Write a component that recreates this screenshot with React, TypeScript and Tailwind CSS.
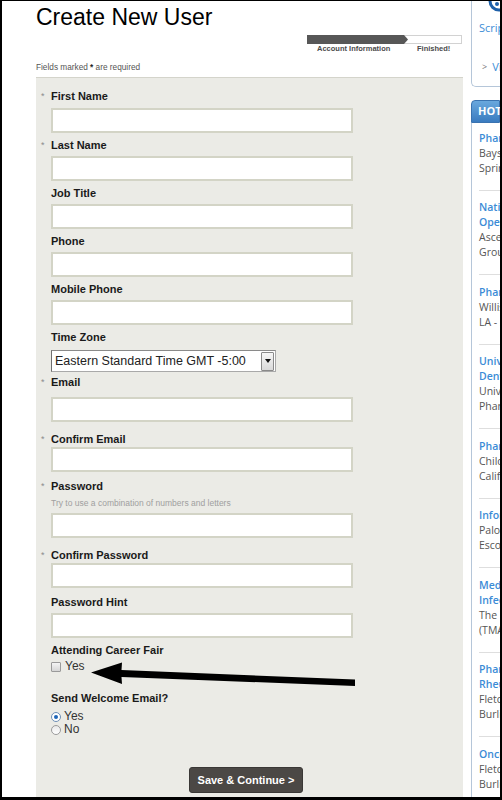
import React from "react";

type Field = {
  label: string;
  required?: boolean;
  labelTop: string;
  inputTop: string;
  hint?: string;
};

const fields: Field[] = [
  { label: "First Name", required: true, labelTop: "mt-[11px]", inputTop: "mt-[5px]" },
  { label: "Last Name", required: true, labelTop: "mt-[5px]", inputTop: "mt-[4px]" },
  { label: "Job Title", labelTop: "mt-[5px]", inputTop: "mt-[4px]" },
  { label: "Phone", labelTop: "mt-[5px]", inputTop: "mt-[4px]" },
  { label: "Mobile Phone", labelTop: "mt-[5px]", inputTop: "mt-[4px]" },
];

const fields2: Field[] = [
  { label: "Email", required: true, labelTop: "mt-[3px]", inputTop: "mt-[8px]" },
  { label: "Confirm Email", required: true, labelTop: "mt-[10px]", inputTop: "mt-[1px]" },
  {
    label: "Password",
    required: true,
    labelTop: "mt-[7px]",
    inputTop: "mt-[4px]",
    hint: "Try to use a combination of numbers and letters",
  },
  { label: "Confirm Password", required: true, labelTop: "mt-[10px]", inputTop: "mt-[1px]" },
  { label: "Password Hint", labelTop: "mt-[7px]", inputTop: "mt-[4px]" },
];

const jobs: { links: string[]; lines: string[] }[] = [
  { links: ["Pharmacist"], lines: ["Baystate Health", "Springfield, MA"] },
  { links: ["National Manager,", "Operations"], lines: ["Ascend Pharmacy", "Group Inc."] },
  { links: ["Pharmacist"], lines: ["Willis-Knighton", "LA - Shreveport"] },
  { links: ["University of", "Denver Pharmacist"], lines: ["University of Denver", "Pharmacy Services"] },
  { links: ["Pharmacist"], lines: ["Children's Hospital", "California"] },
  { links: ["Informatics"], lines: ["Palomar Health", "Escondido, CA"] },
  { links: ["Medical Science Liaison,", "Infectious Disease"], lines: ["The Medicines Company", "(TMAC)"] },
  { links: ["Pharmacist,", "Rheumatology"], lines: ["Fletcher Allen", "Burlington, VT"] },
  { links: ["Oncology Pharmacist"], lines: ["Fletcher Allen", "Burlington, VT"] },
];

const Label = ({ text, required, className }: { text: string; required?: boolean; className: string }) => (
  <div className={`flex h-[14px] items-center ${className}`}>
    <span className="w-[15px] pl-[5px] text-[9px] leading-none text-[#8c8c8c]">{required ? "*" : ""}</span>
    <span className="text-[11px] font-bold leading-[14px] text-[#1a1a1a]">{text}</span>
  </div>
);

const TextInput = ({ className }: { className: string }) => (
  <div className={`ml-[15px] h-[25px] w-[302px] border-2 border-[#d3d4c6] bg-white ${className}`} />
);

const FieldBlock = ({ field }: { field: Field }) => (
  <>
    <Label text={field.label} required={field.required} className={field.labelTop} />
    {field.hint && (
      <div className="mt-[4px] ml-[15px] h-[12px] text-[8.5px] leading-[12px] text-[#a0a0a0]">{field.hint}</div>
    )}
    <TextInput className={field.inputTop} />
  </>
);

const ProgressBar = () => (
  <div className="mt-[4px] mr-[1px] w-[155px] self-end">
    <svg width="155" height="9" viewBox="0 0 155 9">
      <rect x="96" y="0.5" width="58.5" height="8" fill="#fff" stroke="#d2d2d2" />
      <polygon points="0,0 97,0 101,4.5 97,9 0,9" fill="#575757" />
    </svg>
    <div className="flex h-[10px] items-center text-[7.5px] font-bold leading-[10px] text-[#4a4a4a]">
      <span className="w-[110px] pl-[10px]">Account Information</span>
      <span>Finished!</span>
    </div>
  </div>
);

const Sidebar = () => (
  <div className="ml-[8px] flex flex-1 flex-col overflow-hidden whitespace-nowrap font-['Open_Sans',sans-serif]">
    <div className="relative h-[86px] shrink-0 rounded-bl-[5px] border-b border-l border-[#b5c6d9]">
      <svg className="absolute top-[-8px] left-[16px]" width="24" height="22" viewBox="0 0 24 22">
        <circle cx="11" cy="8" r="9" fill="none" stroke="#1d5fa8" strokeWidth="3" />
        <circle cx="9" cy="11" r="2" fill="#1d5fa8" />
      </svg>
      <div className="mt-[19px] pl-[7px] text-[11px] leading-[16px] text-[#3c8dd6]">Scripts</div>
      <div className="mt-[23px] flex items-center pl-[10px] text-[11px] leading-[16px]">
        <span className="text-[9px] text-[#777]">&gt;</span>
        <span className="ml-[5px] text-[#3c8dd6]">View all</span>
      </div>
    </div>
    <div className="mt-[13px] flex h-[23px] shrink-0 items-center rounded-tl-[4px] border border-[#3a73b0] bg-gradient-to-b from-[#69a8de] to-[#3a7bbf] pl-[6px] text-[11px] font-bold text-white">
      HOT JOBS
    </div>
    <div className="flex-1 border-l border-[#b5c6d9] pt-[7.5px] pl-[7px] text-[10.5px] leading-[15px]">
      {jobs.map((job, i) => (
        <div key={i} className={i === 0 ? "pb-[14px]" : "border-t border-[#dedede] pt-[9.5px] pb-[14px]"}>
          {job.links.map((l) => (
            <div key={l} className="font-semibold text-[#3b8bd6]">
              {l}
            </div>
          ))}
          {job.lines.map((l, k) => (
            <div key={k} className="text-[#555]">
              {l}
            </div>
          ))}
        </div>
      ))}
    </div>
  </div>
);

const App = () => {
  return (
    <div className="relative h-[800px] w-[502px] overflow-hidden border-t border-r-2 border-b-[3px] border-l-2 border-black bg-white font-['Liberation_Sans',Arial,sans-serif]">
      <div className="flex h-full">
        <div className="flex w-[461px] shrink-0 flex-col pl-[34px]">
          <h1 className="mt-[2px] h-[28px] text-[23px] leading-[28px] font-normal text-black">Create New User</h1>
          <ProgressBar />
          <div className="mt-[9px] h-[10px] text-[8.25px] leading-[10px] text-[#555]">
            Fields marked <span className="font-bold text-[#222]">*</span> are required
          </div>
          <div className="mt-[4px] flex flex-1 flex-col border-t border-[#d4d4cb] bg-[#ebebe6]">
            {fields.map((f) => (
              <FieldBlock key={f.label} field={f} />
            ))}

            <Label text="Time Zone" className="mt-[5px]" />
            <div className="mt-[6px] ml-[15px] flex h-[22px] w-[225px] items-center border border-[#a9a9a9] border-l-[#6f6f6f] border-t-[#8a8a8a] bg-white">
              <span className="flex-1 pl-[3px] text-[12.5px] text-[#222]">Eastern Standard Time GMT -5:00</span>
              <span className="mr-[1px] flex h-[19px] w-[13px] items-center justify-center rounded-[1px] border border-[#8a8a8a] bg-gradient-to-b from-[#f6f6f6] to-[#d9d9d9]">
                <svg width="6" height="4" viewBox="0 0 6 4">
                  <polygon points="0,0 6,0 3,4" fill="#111" />
                </svg>
              </span>
            </div>

            {fields2.map((f) => (
              <FieldBlock key={f.label} field={f} />
            ))}

            <Label text="Attending Career Fair" className="mt-[5px]" />
            <div className="mt-[3px] ml-[15px] flex h-[13px] items-center">
              <span className="h-[10px] w-[10px] rounded-[1px] border border-[#9a9a9a] bg-gradient-to-b from-[#f4f4f4] to-[#d6d6d6]" />
              <span className="ml-[4px] text-[12px] leading-[13px] text-[#333]">Yes</span>
            </div>

            <Label text="Send Welcome Email?" className="mt-[18px]" />
            <div className="mt-[5px] ml-[15px] flex h-[13px] items-center">
              <span className="flex h-[10px] w-[10px] items-center justify-center rounded-full border border-[#6e8fb5] bg-white">
                <span className="h-[4px] w-[4px] rounded-full bg-[#1f66b8]" />
              </span>
              <span className="ml-[3px] text-[12px] leading-[13px] text-[#333]">Yes</span>
            </div>
            <div className="ml-[15px] flex h-[13px] items-center">
              <span className="h-[10px] w-[10px] rounded-full border border-[#9b9b9b] bg-gradient-to-b from-[#e9e9e9] to-white" />
              <span className="ml-[3px] text-[12px] leading-[13px] text-[#333]">No</span>
            </div>

            <button className="mt-[31px] ml-[153px] flex h-[26px] w-[114px] items-center justify-center rounded-[3px] border border-[#3a3836] bg-[#4b4845] text-[11px] font-bold text-white">
              Save &amp; Continue &gt;
            </button>
          </div>
        </div>
        <Sidebar />
      </div>

      <svg className="pointer-events-none absolute top-[-1px] left-[-2px]" width="502" height="800" viewBox="0 0 502 800">
        <polygon points="91,672.5 122,662.5 121.5,670 355,679.5 355,686 121.5,677 122,684" fill="#000" />
      </svg>
    </div>
  );
};

export default App;
